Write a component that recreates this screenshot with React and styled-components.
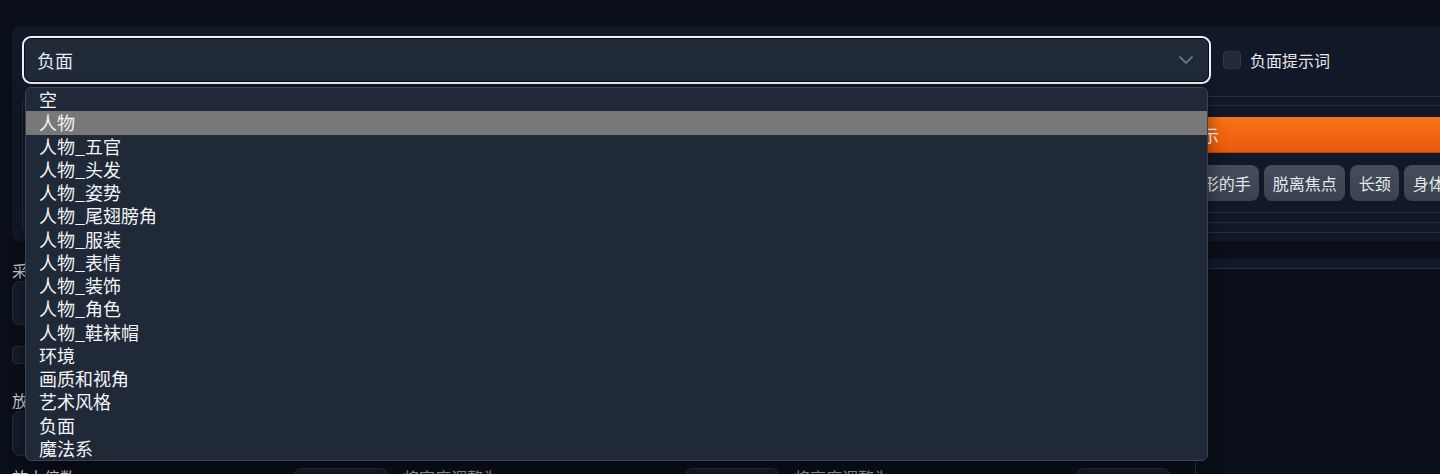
import React from "react";
import styled, { createGlobalStyle } from "styled-components";

const GlobalStyle = createGlobalStyle`
  html, body {
    margin: 0;
    padding: 0;
    background: #0b0f19;
    overflow: hidden;
  }
  body {
    font-family: "Noto Sans CJK SC", "Noto Sans", "Liberation Sans", sans-serif;
    color: #e5e7eb;
  }
`;

const Page = styled.div`
  width: 2314px;
  padding: 26px 12px 0;
  box-sizing: border-box;
  display: flex;
  flex-direction: column;
  gap: 18px;
`;

const Panel = styled.section`
  background: #111827;
  border-radius: 8px;
  padding: 10px 10px 8px;
`;

const SelectRow = styled.div`
  display: flex;
  align-items: center;
  gap: 12px;
`;

const SelectWrap = styled.div`
  position: relative;
  width: 1185px;
  margin: 2px;
`;

const SelectBox = styled.div`
  height: 44px;
  box-sizing: border-box;
  background: #1f2937;
  border: 1px solid #0b0f19;
  border-radius: 7px;
  box-shadow: 0 0 0 2px #eef0f3;
  display: flex;
  align-items: center;
  justify-content: space-between;
  padding: 0 10px 0 12px;
  font-size: 18px;
  color: #e5e7eb;
`;

const Menu = styled.ul`
  position: absolute;
  top: calc(100% + 5px);
  left: 1px;
  right: 1px;
  margin: 0;
  padding: 0;
  list-style: none;
  background: #1f2937;
  border: 1px solid #3c4453;
  border-radius: 6px;
  box-shadow: 0 6px 18px rgba(0, 0, 0, 0.45);
  z-index: 10;
  overflow: hidden;
`;

const MenuItem = styled.li`
  height: 23.25px;
  line-height: 23.25px;
  padding-left: 13px;
  font-size: 18px;
  color: #f3f4f6;
  background: ${(p) => (p.$active ? "#787878" : "transparent")};
`;

const CheckLabel = styled.label`
  display: flex;
  align-items: center;
  gap: 9px;
  font-size: 16px;
  color: #e5e7eb;
`;

const Check = styled.span`
  width: 18px;
  height: 18px;
  box-sizing: border-box;
  border-radius: 4px;
  background: #1f2937;
  border: 1px solid #303949;
  flex: none;
`;

const Block = styled.div`
  margin-top: 12px;
  border: 1px solid #262f3e;
  border-radius: 8px;
  padding: 8px 0 9px;
  overflow: hidden;
`;

const Inner = styled.div`
  border-top: 1px solid #262f3e;
  border-bottom: 1px solid #262f3e;
  padding: 11px 0 9px 5px;
  display: flex;
  flex-direction: column;
  gap: 12px;
`;

const OrangeButton = styled.button`
  height: 36px;
  border: none;
  border-bottom: 1px solid #c2410c;
  background: linear-gradient(180deg, #f97316 0%, #ea580c 100%);
  color: #fff;
  font-family: inherit;
  font-size: 17px;
  display: flex;
  align-items: center;
  justify-content: center;
  padding: 0;
`;

const ChipRow = styled.div`
  display: flex;
  gap: 5px;
  white-space: nowrap;
`;

const Chip = styled.span`
  height: 36px;
  line-height: 36px;
  padding: 0 8.5px;
  border-radius: 8px;
  background: linear-gradient(180deg, #454d5b 0%, #3a424f 100%);
  color: #e5e7eb;
  font-size: 16px;
  flex: none;
`;

const Separator = styled.div`
  height: 1px;
  background: #262f3e;
  margin-top: -1px;
  margin-left: -5px;
`;

const Lower = styled.div`
  display: flex;
  gap: 12px;
  align-items: stretch;
`;

const LeftCol = styled.div`
  width: 1171px;
  flex: none;
  display: flex;
  flex-direction: column;
`;

const FieldLabel = styled.div`
  font-size: 16px;
  line-height: 22px;
  color: #c9cdd4;
  margin-top: ${(p) => p.$mt || 0}px;
`;

const Field = styled.div`
  height: ${(p) => p.$h || 44}px;
  box-sizing: border-box;
  background: #151b28;
  border: 1px solid #262e3c;
  border-radius: 8px;
`;

const OptionRow = styled.div`
  margin-top: 18px;
  display: flex;
  align-items: center;
  gap: 9px;
  font-size: 16px;
  color: #c9cdd4;
`;

const SmallCheck = styled.span`
  width: 18px;
  height: 18px;
  box-sizing: border-box;
  border-radius: 4px;
  background: #151b28;
  border: 1px solid #262e3c;
`;

const SliderGrid = styled.div`
  margin-top: 12px;
  display: grid;
  grid-template-columns: repeat(3, 375px);
  column-gap: 16px;
`;

const SliderGroup = styled.div`
  display: flex;
  justify-content: space-between;
  align-items: flex-start;
`;

const SliderLabel = styled.span`
  font-size: 16px;
  line-height: 18px;
  color: ${(p) => (p.$dim ? "#8f949c" : "#c9cdd4")};
`;

const NumberBox = styled.div`
  width: 92px;
  height: 40px;
  box-sizing: border-box;
  background: #151b28;
  border: 1px solid #262e3c;
  border-radius: 6px;
  text-align: center;
  font-size: 16px;
  line-height: 22px;
  padding-top: 2px;
  color: #d1d5db;
`;

const RightCol = styled.div`
  flex: 1;
  border-left: 1px solid #283142;
`;

const RightBand = styled.div`
  height: 9px;
  background: #111827;
  border-bottom: 1px solid #283142;
`;

const items = [
  "空",
  "人物",
  "人物_五官",
  "人物_头发",
  "人物_姿势",
  "人物_尾翅膀角",
  "人物_服装",
  "人物_表情",
  "人物_装饰",
  "人物_角色",
  "人物_鞋袜帽",
  "环境",
  "画质和视角",
  "艺术风格",
  "负面",
  "魔法系",
];

const chips = [
  "低分辨率",
  "糟糕的解剖结构",
  "糟糕的手",
  "文字错误",
  "缺少手指",
  "多余的数字",
  "较少的数字",
  "裁剪",
  "最差质量",
  "低质量",
  "签名水印",
  "用户名字",
  "模糊不清",
  "畸形的手",
  "脱离焦点",
  "长颈",
  "身体比例失调",
  "多余的肢体",
];

const Chevron = () => (
  <svg width="24" height="24" viewBox="0 0 24 24" fill="none" stroke="#6b7280" strokeWidth="1.8" strokeLinecap="round" strokeLinejoin="round">
    <polyline points="6 9 12 15 18 9" />
  </svg>
);

export default function App() {
  return (
    <>
      <GlobalStyle />
      <Page>
        <Panel>
          <SelectRow>
            <SelectWrap>
              <SelectBox>
                <span>负面</span>
                <Chevron />
              </SelectBox>
              <Menu>
                {items.map((it, i) => (
                  <MenuItem key={it} $active={i === 1}>
                    {it}
                  </MenuItem>
                ))}
              </Menu>
            </SelectWrap>
            <CheckLabel>
              <Check />
              负面提示词
            </CheckLabel>
          </SelectRow>
          <Block>
            <Inner>
              <OrangeButton>添加到负面提示</OrangeButton>
              <ChipRow>
                {chips.map((c) => (
                  <Chip key={c}>{c}</Chip>
                ))}
              </ChipRow>
              <Separator />
            </Inner>
          </Block>
        </Panel>
        <Lower>
          <LeftCol>
            <FieldLabel>采样方法</FieldLabel>
            <Field $h={44} />
            <OptionRow>
              <SmallCheck />
              高分辨率修复
            </OptionRow>
            <FieldLabel $mt={22}>放大算法</FieldLabel>
            <Field $h={45} />
            <SliderGrid>
              <SliderGroup>
                <SliderLabel>放大倍数</SliderLabel>
                <NumberBox>2</NumberBox>
              </SliderGroup>
              <SliderGroup>
                <SliderLabel $dim>将宽度调整为</SliderLabel>
                <NumberBox>0</NumberBox>
              </SliderGroup>
              <SliderGroup>
                <SliderLabel $dim>将高度调整为</SliderLabel>
                <NumberBox>0</NumberBox>
              </SliderGroup>
            </SliderGrid>
          </LeftCol>
          <RightCol>
            <RightBand />
          </RightCol>
        </Lower>
      </Page>
    </>
  );
}
